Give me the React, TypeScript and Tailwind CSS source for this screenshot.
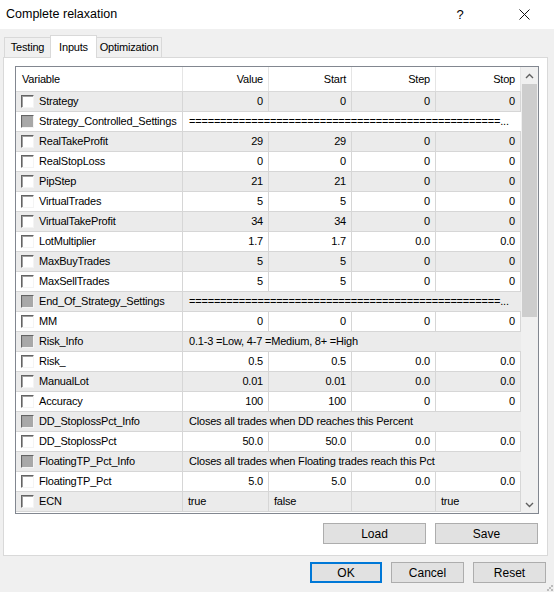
import React from "react";

type Row =
  | { name: string; kind: "num"; vals: [string, string, string, string] }
  | { name: string; kind: "info"; text: string }
  | { name: string; kind: "text"; vals: [string, string, string, string] };

const SEP = "=".repeat(50) + "...";

const ROWS: Row[] = [
  { name: "Strategy", kind: "num", vals: ["0", "0", "0", "0"] },
  { name: "Strategy_Controlled_Settings", kind: "info", text: SEP },
  { name: "RealTakeProfit", kind: "num", vals: ["29", "29", "0", "0"] },
  { name: "RealStopLoss", kind: "num", vals: ["0", "0", "0", "0"] },
  { name: "PipStep", kind: "num", vals: ["21", "21", "0", "0"] },
  { name: "VirtualTrades", kind: "num", vals: ["5", "5", "0", "0"] },
  { name: "VirtualTakeProfit", kind: "num", vals: ["34", "34", "0", "0"] },
  { name: "LotMultiplier", kind: "num", vals: ["1.7", "1.7", "0.0", "0.0"] },
  { name: "MaxBuyTrades", kind: "num", vals: ["5", "5", "0", "0"] },
  { name: "MaxSellTrades", kind: "num", vals: ["5", "5", "0", "0"] },
  { name: "End_Of_Strategy_Settings", kind: "info", text: SEP },
  { name: "MM", kind: "num", vals: ["0", "0", "0", "0"] },
  { name: "Risk_Info", kind: "info", text: "0.1-3 =Low, 4-7 =Medium, 8+ =High" },
  { name: "Risk_", kind: "num", vals: ["0.5", "0.5", "0.0", "0.0"] },
  { name: "ManualLot", kind: "num", vals: ["0.01", "0.01", "0.0", "0.0"] },
  { name: "Accuracy", kind: "num", vals: ["100", "100", "0", "0"] },
  { name: "DD_StoplossPct_Info", kind: "info", text: "Closes all trades when DD reaches this Percent" },
  { name: "DD_StoplossPct", kind: "num", vals: ["50.0", "50.0", "0.0", "0.0"] },
  { name: "FloatingTP_Pct_Info", kind: "info", text: "Closes all trades when Floating trades reach this Pct" },
  { name: "FloatingTP_Pct", kind: "num", vals: ["5.0", "5.0", "0.0", "0.0"] },
  { name: "ECN", kind: "text", vals: ["true", "false", "", "true"] },
];

const COLS = "grid grid-cols-[167px_86px_83px_84px_85px]";

function Check({ disabled }: { disabled?: boolean }) {
  return (
    <span
      className={
        "w-[13px] h-[13px] shrink-0 border border-t-[#646464] border-l-[#646464] border-r-[#f4f4f4] border-b-[#f4f4f4] shadow-[inset_1px_1px_0_#a0a0a0] " +
        (disabled ? "bg-[#a8a8a8]" : "bg-white")
      }
    />
  );
}

function Btn({ label, w, primary }: { label: string; w: string; primary?: boolean }) {
  return (
    <div
      className={
        "h-[21px] flex items-center justify-center bg-[#e1e1e1] text-[12px] text-black " +
        w +
        (primary ? " border-2 border-[#0078d7]" : " border border-[#adadad]")
      }
    >
      {label}
    </div>
  );
}

export default function App() {
  return (
    <div className="w-[554px] h-[592px] bg-[#f0f0f0] flex flex-col font-['Liberation_Sans',Arial,sans-serif] text-black select-none">
      {/* Title bar */}
      <div className="h-[29px] bg-white flex items-center shrink-0">
        <span className="pl-[6px] text-[12.5px] flex-1">Complete relaxation</span>
        <span className="text-[13px] w-[30px] text-center mr-[44px]">?</span>
        <svg width="11" height="11" viewBox="0 0 11 11" className="mr-[24px]">
          <path d="M0.5 0.5 L10.5 10.5 M10.5 0.5 L0.5 10.5" stroke="#111" strokeWidth="1" />
        </svg>
      </div>

      {/* Tabs */}
      <div className="flex items-end h-[28px] pl-[4px] shrink-0 text-[11px] tracking-[-0.2px]">
        <div className="w-[47px] h-[20px] flex items-center justify-center border border-b-0 border-[#d9d9d9] bg-[#f0f0f0]">
          Testing
        </div>
        <div className="w-[47px] h-[23px] flex items-start justify-center pt-[3px] border border-b-0 border-[#d9d9d9] bg-white relative top-[1px] -mx-[1px] z-10">
          Inputs
        </div>
        <div className="w-[66px] h-[20px] flex items-center justify-center border border-b-0 border-[#d9d9d9] bg-[#f0f0f0]">
          Optimization
        </div>
      </div>

      {/* Panel */}
      <div className="mx-[3px] mr-[6px] h-[499px] bg-white border border-[#d9d9d9] flex flex-col shrink-0">
        <div className="mt-[8px] ml-[11px] w-[524px] h-[448px] border border-[#828790] flex text-[11px] tracking-[-0.2px]">
          <div className="flex flex-col w-[505px]">
            {/* Header */}
            <div className={COLS + " h-[25px] border-b border-[#d9d9d9]"}>
              <div className="flex items-center pl-[6px] border-r border-[#e5e5e5]">Variable</div>
              {["Value", "Start", "Step", "Stop"].map((h) => (
                <div key={h} className="flex items-center justify-end pr-[5px] border-r border-[#e5e5e5]">
                  {h}
                </div>
              ))}
            </div>
            {ROWS.map((r, i) => (
              <div
                key={r.name}
                className={COLS + " h-[20px] border-b border-[#d6d6d6] " + (i % 2 === 0 ? "bg-[#ebebeb]" : "bg-white")}
              >
                <div className="flex items-center gap-[5px] pl-[5px] border-r border-[#d6d6d6]">
                  <Check disabled={r.kind === "info"} />
                  <span>{r.name}</span>
                </div>
                {r.kind === "info" ? (
                  <div className="col-span-4 flex items-center pl-[6px] overflow-hidden whitespace-nowrap">
                    {r.text}
                  </div>
                ) : (
                  r.vals.map((v, j) => (
                    <div
                      key={j}
                      className={
                        "flex items-center border-r border-[#d6d6d6] " +
                        (r.kind === "num" ? "justify-end pr-[5px]" : "justify-start pl-[5px]")
                      }
                    >
                      {v}
                    </div>
                  ))
                )}
              </div>
            ))}
          </div>
          {/* Scrollbar */}
          <div className="w-[17px] flex flex-col bg-[#f0f0f0]">
            <div className="h-[17px] flex items-center justify-center">
              <svg width="9" height="6" viewBox="0 0 9 6">
                <path d="M1 5 L4.5 1.5 L8 5" fill="none" stroke="#606060" strokeWidth="1.4" />
              </svg>
            </div>
            <div className="flex-1 flex flex-col">
              <div className="h-[233px] bg-[#cdcdcd] mx-[1px]" />
            </div>
            <div className="h-[17px] flex items-center justify-center">
              <svg width="9" height="6" viewBox="0 0 9 6">
                <path d="M1 1 L4.5 4.5 L8 1" fill="none" stroke="#606060" strokeWidth="1.4" />
              </svg>
            </div>
          </div>
        </div>

        <div className="flex justify-end gap-[9px] mt-[9px] mr-[9px]">
          <Btn label="Load" w="w-[103px]" />
          <Btn label="Save" w="w-[103px]" />
        </div>
      </div>

      {/* Bottom buttons */}
      <div className="flex justify-end gap-[9px] mt-[6px] mr-[8px]">
        <Btn label="OK" w="w-[72px]" primary />
        <Btn label="Cancel" w="w-[73px]" />
        <Btn label="Reset" w="w-[73px]" />
      </div>
      <div className="flex-1 flex justify-end items-end pr-[1px] pb-[1px]">
        <svg width="6" height="6" viewBox="0 0 6 6">
          <rect x="4" y="0" width="2" height="2" fill="#bcbcbc" />
          <rect x="0" y="4" width="2" height="2" fill="#bcbcbc" />
          <rect x="4" y="4" width="2" height="2" fill="#bcbcbc" />
          <rect x="2" y="2" width="2" height="2" fill="#bcbcbc" />
        </svg>
      </div>
    </div>
  );
}
